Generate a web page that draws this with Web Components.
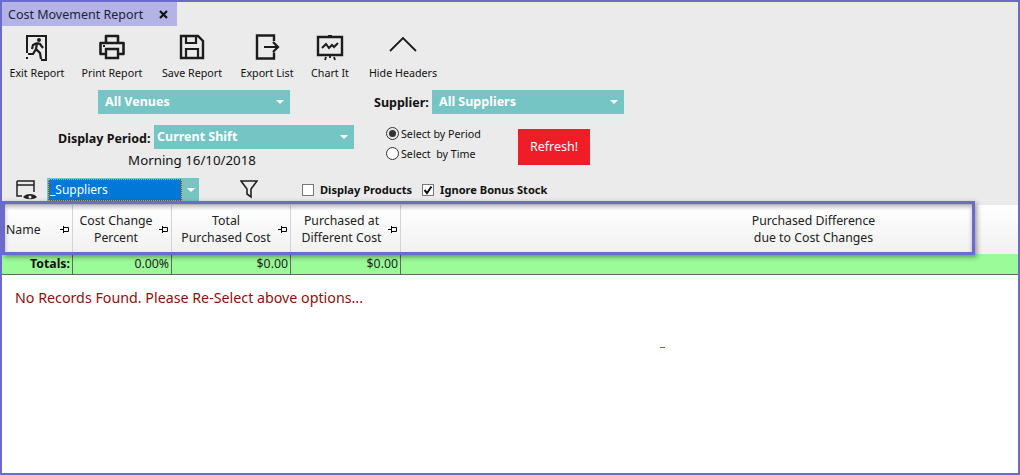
<!DOCTYPE html>
<html>
<head>
<meta charset="utf-8">
<title>Cost Movement Report</title>
<style>
  html, body { margin: 0; padding: 0; background: #fff; }
  body { font-family: "Noto Sans", "Open Sans", sans-serif; }
</style>
</head>
<body>
<report-window>
  <report-tab slot="tab">Cost Movement Report</report-tab>

  <report-toolbar slot="toolbar">
    <tool-button label="Exit Report" icon="exit" width="70"></tool-button>
    <tool-button label="Print Report" icon="print" width="80"></tool-button>
    <tool-button label="Save Report" icon="save" width="80"></tool-button>
    <tool-button label="Export List" icon="export" width="70"></tool-button>
    <tool-button label="Chart It" icon="chart" width="56"></tool-button>
    <tool-button label="Hide Headers" icon="hide" width="90"></tool-button>
  </report-toolbar>

  <report-filters slot="filters"></report-filters>
  <report-grid slot="grid"></report-grid>
</report-window>

<script>
/**
 * Window frame with slots for each of the report parts.
 */
class ReportWindow extends HTMLElement {
  constructor () {
    super()
    this.attachShadow({ mode: 'open' }).innerHTML = `
      <style>
        :host {
          display: block;
          box-sizing: border-box;
          position: relative;
          width: 1020px;
          height: 475px;
          border: 2px solid #6b6bcd;
          background: #fff;
          overflow: hidden;
        }
        .top { background: #ebebeb; height: 203px; }
        .mark {
          position: absolute;
          left: 0;
          top: 199px;
          width: 973px;
          height: 54px;
          box-sizing: border-box;
          border: 3px solid #6b6bcd;
          box-shadow: 2px 2px 5px rgba(0, 0, 0, 0.4), inset 0 3px 4px rgba(0, 0, 0, 0.28);
        }
        .dash {
          position: absolute;
          left: 658px;
          top: 345px;
          width: 5px;
          height: 1px;
          background: #5a5ad0;
          box-shadow: 0 4px 6px rgba(0, 0, 0, 0.12);
        }
      </style>
      <div class="top">
        <slot name="tab"></slot>
        <slot name="toolbar"></slot>
        <slot name="filters"></slot>
      </div>
      <slot name="grid"></slot>
      <div class="mark"></div>
      <div class="dash"></div>
    `
  }
}
customElements.define('report-window', ReportWindow)

/**
 * The tab at the top left.
 */
class ReportTab extends HTMLElement {
  constructor () {
    super()
    this.attachShadow({ mode: 'open' }).innerHTML = `
      <style>
        :host {
          display: flex;
          align-items: center;
          box-sizing: border-box;
          width: 175px;
          height: 24px;
          padding-left: 6px;
          background: #b3b3e6;
          color: #1f1f3a;
          font-size: 12.5px;
        }
        svg { margin-left: 16px; }
      </style>
      <slot></slot>
      <svg width="9" height="9" viewBox="0 0 9 9"><path d="M1 1l7 7M8 1L1 8" stroke="#111" stroke-width="2.2" fill="none"/></svg>
    `
  }
}
customElements.define('report-tab', ReportTab)

/**
 * Row of tool buttons.
 */
class ReportToolbar extends HTMLElement {
  constructor () {
    super()
    this.attachShadow({ mode: 'open' }).innerHTML = `
      <style>
        :host {
          display: flex;
          box-sizing: border-box;
          height: 58px;
          padding: 7px 0 0 0;
        }
      </style>
      <slot></slot>
    `
  }
}
customElements.define('report-toolbar', ReportToolbar)

const ICONS = {
  exit: `<path d="M4 20V3h19v24h-5" fill="none" stroke="#1c1c1c" stroke-width="2"/>
    <circle cx="16" cy="7" r="2" fill="#1c1c1c"/>
    <path d="M14 10l-4 2-1 4M14 10l3 1 3 4M14 10l-1 6 4 4 1 6M13 16l-3 5H5" fill="none" stroke="#1c1c1c" stroke-width="2.2"/>
    <path d="M3 24h2v2H3z" fill="#1c1c1c"/>`,
  print: `<path d="M8 10V3h12v7M7 21H2.500V10h23v11H21" fill="none" stroke="#1c1c1c" stroke-width="2.6" stroke-linejoin="round"/>
    <path d="M8 16h12v9H8z" fill="none" stroke="#1c1c1c" stroke-width="2.4"/>
    <path d="M5 12h2v2H5z" fill="#1c1c1c"/>`,
  save: `<path d="M3 3h17l5 5v17H3z" fill="none" stroke="#1c1c1c" stroke-width="2.4"/>
    <path d="M8 3v7h10V3M8 25v-9h12v9" fill="none" stroke="#1c1c1c" stroke-width="2.2"/>`,
  export: `<path d="M21 8V2.500H4v23h17v-6" fill="none" stroke="#1c1c1c" stroke-width="2.4"/>
    <path d="M11 14h14M20 9l5 5-5 5" fill="none" stroke="#1c1c1c" stroke-width="2.2"/>`,
  chart: `<path d="M2 4h24v18H2z" fill="none" stroke="#1c1c1c" stroke-width="2.4"/>
    <path d="M12 2h4v2h-4z" fill="#1c1c1c"/>
    <path d="M6 15l4-4 3 4 3-3 2 2 4-4" fill="none" stroke="#1c1c1c" stroke-width="2"/>
    <path d="M14 23v2M10 24l-1 3M18 24l1 3" fill="none" stroke="#1c1c1c" stroke-width="1.800"/>`,
  hide: `<path d="M1 18L14 5l13 13" fill="none" stroke="#1c1c1c" stroke-width="1.800"/>`
}

/**
 * A toolbar button: icon above a label.
 */
class ToolButton extends HTMLElement {
  constructor () {
    super()
    this.attachShadow({ mode: 'open' })
  }

  connectedCallback () {
    const width = this.getAttribute('width')
    this.shadowRoot.innerHTML = `
      <style>
        :host {
          display: flex;
          flex-direction: column;
          align-items: center;
          width: ${width}px;
          font-size: 10.7px;
          color: #111;
          white-space: nowrap;
        }
        svg { display: block; margin-bottom: 5px; }
      </style>
      <svg width="28" height="28" viewBox="0 0 28 28">${ICONS[this.getAttribute('icon')]}</svg>
      <span>${this.getAttribute('label')}</span>
    `
  }
}
customElements.define('tool-button', ToolButton)

/**
 * Teal drop down box.
 */
class TealSelect extends HTMLElement {
  constructor () {
    super()
    this.attachShadow({ mode: 'open' }).innerHTML = `
      <style>
        :host {
          display: flex;
          align-items: center;
          justify-content: space-between;
          box-sizing: border-box;
          height: 24px;
          padding: 0 6px 2px 7px;
          background: #75c5c5;
          color: #fff;
          font-size: 12.5px;
          font-weight: 700;
          white-space: nowrap;
        }
        i {
          width: 0;
          height: 0;
          margin-top: 2px;
          border: 4px solid transparent;
          border-top: 4px solid #fff;
          border-bottom: 0;
        }
      </style>
      <slot></slot><i></i>
    `
  }
}
customElements.define('teal-select', TealSelect)

/**
 * Round option with label.
 */
class RadioOption extends HTMLElement {
  constructor () {
    super()
    this.attachShadow({ mode: 'open' }).innerHTML = `
      <style>
        :host {
          display: flex;
          align-items: center;
          gap: 2px;
          height: 15px;
          font-size: 10.7px;
          color: #111;
          white-space: nowrap;
        }
        b {
          box-sizing: border-box;
          width: 13px;
          height: 13px;
          border: 1px solid #333;
          border-radius: 50%;
          background: #fff;
          display: flex;
          align-items: center;
          justify-content: center;
        }
        :host([checked]) b::after {
          content: "";
          width: 7px;
          height: 7px;
          border-radius: 50%;
          background: #333;
        }
        :host([checked]) b { background: #ebebeb; }
      </style>
      <b></b><slot></slot>
    `
  }
}
customElements.define('radio-option', RadioOption)

/**
 * Square check box with bold label.
 */
class CheckOption extends HTMLElement {
  constructor () {
    super()
    this.attachShadow({ mode: 'open' }).innerHTML = `
      <style>
        :host {
          display: flex;
          align-items: center;
          gap: 6px;
          font-size: 11.1px;
          font-weight: 700;
          color: #111;
          white-space: nowrap;
        }
        b {
          box-sizing: border-box;
          width: 12px;
          height: 12px;
          border: 1px solid #777;
          background: #fff;
          display: block;
        }
        svg { display: none; }
        :host([checked]) svg { display: block; }
      </style>
      <b><svg width="10" height="10" viewBox="0 0 10 10"><path d="M1.500 5l2.500 3 4.500-6.500" fill="none" stroke="#111" stroke-width="2"/></svg></b>
      <slot></slot>
    `
  }
}
customElements.define('check-option', CheckOption)

/**
 * All the filter rows under the toolbar.
 */
class ReportFilters extends HTMLElement {
  constructor () {
    super()
    this.attachShadow({ mode: 'open' }).innerHTML = `
      <style>
        :host { display: block; padding-top: 6px; color: #111; }
        .label { font-size: 12.5px; font-weight: 700; white-space: nowrap; }
        .first { display: flex; align-items: center; padding-left: 96px; height: 24px; }
        .first .venues { width: 192px; }
        .first .label { margin-left: 84px; width: 58px; }
        .first .suppliers { width: 192px; }

        .second { display: flex; margin-top: 11px; height: 53px; }
        .period { width: 352px; }
        .period-row { display: flex; align-items: center; height: 24px; padding-left: 56px; gap: 2px; }
        .period-row .label { width: 94px; padding-top: 2px; }
        .period-row teal-select { width: 200px; padding-left: 3px; }
        .shift { text-align: center; font-size: 13.3px; padding: 2px 0 0 0; width: 380px; }
        .radios { margin-left: 32px; padding-top: 1px; width: 132px; display: flex; flex-direction: column; gap: 5px; }
        .refresh {
          width: 72px;
          height: 36px;
          margin-top: 4px;
          padding-bottom: 2px;
          box-sizing: border-box;
          background: #f01c28;
          color: #fff;
          font-size: 12.5px;
          display: flex;
          align-items: center;
          justify-content: center;
        }

        .third { display: flex; align-items: center; height: 23px; padding-left: 14px; }
        .picker {
          box-sizing: border-box;
          display: flex;
          width: 152px;
          height: 23px;
          margin-left: 9px;
          background: #75c5c5;
          color: #fff;
          font-size: 12px;
        }
        .picker span {
          box-sizing: border-box;
          width: 134px;
          padding: 2px 0 0 2px;
          margin: 1px 0 0 1px;
          background: #0078d7;
          outline: 1px dotted #e8a040;
          outline-offset: -1px;
        }
        .picker i {
          margin: 10px 0 0 5px;
          width: 0;
          height: 0;
          border: 4px solid transparent;
          border-top: 4px solid #fff;
          border-bottom: 0;
        }
        .funnel { margin-left: 41px; }
        .third check-option:first-of-type { margin-left: 44px; }
        .third check-option + check-option { margin-left: 10px; }
      </style>
      <div class="first">
        <teal-select class="venues">All Venues</teal-select>
        <span class="label">Supplier:</span>
        <teal-select class="suppliers">All Suppliers</teal-select>
      </div>
      <div class="second">
        <div class="period">
          <div class="period-row">
            <span class="label">Display Period:</span>
            <teal-select>Current Shift</teal-select>
          </div>
          <div class="shift">Morning 16/10/2018</div>
        </div>
        <div class="radios">
          <radio-option checked>Select by Period</radio-option>
          <radio-option>Select&nbsp; by Time</radio-option>
        </div>
        <div class="refresh">Refresh!</div>
      </div>
      <div class="third">
        <svg width="22" height="23" viewBox="0 0 22 23">
          <path d="M1 3h17v11M1 3v15h5M1 7h17" fill="none" stroke="#222" stroke-width="1.500"/>
          <path d="M7 19c3-4 11-4 14 0-3 3-11 3-14 0z" fill="#222"/>
          <circle cx="14" cy="19" r="1.500" fill="#ebebeb"/>
        </svg>
        <div class="picker"><span>_Suppliers</span><i></i></div>
        <svg class="funnel" width="18" height="19" viewBox="0 0 18 19">
          <path d="M1 1h16l-6 8v8l-4 -3V9z" fill="none" stroke="#222" stroke-width="1.600"/>
        </svg>
        <check-option>Display Products</check-option>
        <check-option checked>Ignore Bonus Stock</check-option>
      </div>
    `
  }
}
customElements.define('report-filters', ReportFilters)

const COLUMNS = [
  { width: 71, title: 'Name', left: true, total: 'Totals:', bold: true },
  { width: 99, title: 'Cost Change<br>Percent', total: '0.00%', pad: 12 },
  { width: 119, title: 'Total<br>Purchased Cost', total: '$0.00', pad: 10 },
  { width: 110, title: 'Purchased at<br>Different Cost', total: '$0.00', pad: 8 }
]

/**
 * Header, totals row and the empty message.
 */
class ReportGrid extends HTMLElement {
  constructor () {
    super()
    const pin = `<svg class="pin" width="9" height="7" viewBox="0 0 9 7"><path d="M0 3.500h3M3.500 0v7M3.500 1.500h5v4h-5" fill="none" stroke="#000"/></svg>`
    const heads = COLUMNS.map(c => `
      <div class="head ${c.left ? 'left' : ''}" style="width:${c.width}px;padding-right:${c.pad || 0}px"><span>${c.title}</span>${pin}</div>`).join('')
    const totals = COLUMNS.map(c => `
      <div class="total ${c.bold ? 'bold' : ''}" style="width:${c.width}px">${c.total}</div>`).join('')

    this.attachShadow({ mode: 'open' }).innerHTML = `
      <style>
        :host { display: block; font-size: 12.3px; color: #222; }
        .heads { display: flex; height: 49px; background: linear-gradient(#fff, #f1f1f1); }
        .head {
          box-sizing: border-box;
          position: relative;
          border-right: 1px solid #d4d4d4;
          display: flex;
          align-items: center;
          justify-content: center;
          text-align: center;
          line-height: 17.5px;
          padding-bottom: 1px;
        }
        .head.left { justify-content: flex-start; padding-left: 4px; padding-bottom: 0; padding-top: 1px; }
        .pin { position: absolute; right: 3px; top: 21px; }
        .wide { flex: 1; display: flex; justify-content: center; text-align: center; align-items: center; line-height: 17.5px; padding-bottom: 1px; }
        .wide span { margin-left: 208px; display: block; width: 140px; }
        .totals {
          display: flex;
          height: 21px;
          background: #9bfb98;
          border-bottom: 1px solid #666;
          box-sizing: border-box;
        }
        .total {
          box-sizing: border-box;
          border-right: 1px solid #666;
          text-align: right;
          padding-right: 2px;
          line-height: 19px;
        }
        .total.bold { font-weight: 700; color: #111; }
        .message { color: #8b1010; font-size: 14.25px; padding: 13px 0 0 13px; }
      </style>
      <div class="heads">
        ${heads}
        <div class="wide"><span>Purchased Difference<br>due to Cost Changes</span></div>
      </div>
      <div class="totals">${totals}</div>
      <div class="message">No Records Found. Please Re-Select above options...</div>
    `
  }
}
customElements.define('report-grid', ReportGrid)
</script>
</body>
</html>
